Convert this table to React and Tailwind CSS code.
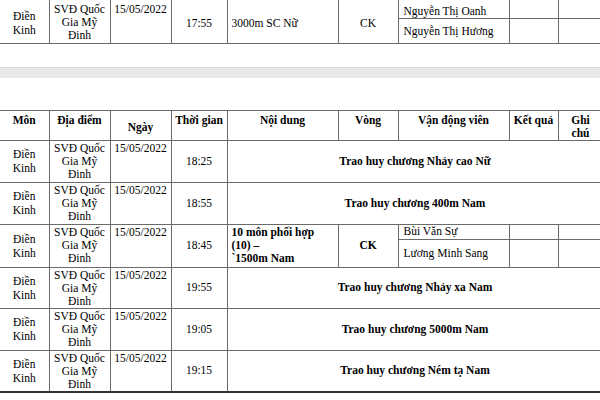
const cols = [49, 61, 61, 56, 111, 60, 111, 49, 45];

const td = 'border border-[#6b6b6b] p-0 px-[2px] text-center';

const Cols = () => (
  <colgroup>
    {cols.map((w, i) => (
      <col key={i} style={{ width: w }} />
    ))}
  </colgroup>
);

const Venue = () => (
  <>
    SVĐ Quốc
    <br />
    Gia Mỹ
    <br />
    Đinh
  </>
);

const Sport = () => (
  <span className="block leading-[14px]">
    Điền
    <br />
    Kinh
  </span>
);

const MedalRow = ({ time, text, h, last }) => {
  const b = last ? 'border-b-2 border-b-[#333]' : '';
  return (
    <tr className={h}>
      <td className={`${td} border-l-0 align-middle ${b}`}>
        <Sport />
      </td>
      <td className={`${td} align-top pt-[1px] ${b}`}>
        <Venue />
      </td>
      <td className={`${td} align-top pt-[1px] ${b}`}>15/05/2022</td>
      <td className={`${td} align-middle ${b}`}>{time}</td>
      <td colSpan={5} className={`${td} align-middle font-bold ${b}`}>
        {text}
      </td>
    </tr>
  );
};

const App = () => {
  return (
    <div className="w-[600px] h-[400px] overflow-hidden bg-white text-black font-['Liberation_Serif',serif] text-[11.5px] leading-[13px]">
      <table className="table-fixed border-collapse w-[603px]">
        <Cols />
        <tbody>
          <tr className="h-[18px]">
            <td rowSpan={2} className={`${td} border-l-0 border-t-0 align-middle pt-[4px]`}>
              <Sport />
            </td>
            <td rowSpan={2} className={`${td} border-t-0 align-top pt-[3px]`}>
              <Venue />
            </td>
            <td rowSpan={2} className={`${td} border-t-0 align-top pt-[3px]`}>
              15/05/2022
            </td>
            <td rowSpan={2} className={`${td} border-t-0 align-middle pt-[4px]`}>
              17:55
            </td>
            <td rowSpan={2} className={`${td} border-t-0 align-middle pt-[4px] text-left pl-[4px]`}>
              3000m SC Nữ
            </td>
            <td rowSpan={2} className={`${td} border-t-0 align-middle pt-[4px]`}>
              CK
            </td>
            <td className={`${td} border-t-0 text-left pl-[5px] align-bottom`}>Nguyễn Thị Oanh</td>
            <td className={`${td} border-t-0`}></td>
            <td className={`${td} border-t-0`}></td>
          </tr>
          <tr className="h-[25px]">
            <td className={`${td} text-left pl-[5px] align-middle pt-[2px]`}>Nguyễn Thị Hương</td>
            <td className={td}></td>
            <td className={td}></td>
          </tr>
        </tbody>
      </table>

      <div className="h-[23px]" />
      <div className="h-[11px] bg-[#e9e9e9] border-t border-[#d6d6d6]" />
      <div className="h-[32px]" />

      <table className="table-fixed border-collapse w-[603px]">
        <Cols />
        <tbody>
          <tr className="h-[28px] font-bold">
            <td className={`${td} border-l-0 align-top pt-[3px]`}>Môn</td>
            <td className={`${td} align-top pt-[3px]`}>Địa điểm</td>
            <td className={`${td} align-top pt-[10px]`}>Ngày</td>
            <td className={`${td} align-top pt-[3px]`}>Thời gian</td>
            <td className={`${td} align-top pt-[3px]`}>Nội dung</td>
            <td className={`${td} align-top pt-[3px]`}>Vòng</td>
            <td className={`${td} align-top pt-[3px]`}>Vận động viên</td>
            <td className={`${td} align-top pt-[3px]`}>Kết quả</td>
            <td className={`${td} align-top pt-[3px]`}>
              Ghi
              <br />
              chú
            </td>
          </tr>
          <MedalRow time="18:25" text="Trao huy chương Nhảy cao Nữ" h="h-[42px]" />
          <MedalRow time="18:55" text="Trao huy chương 400m Nam" h="h-[42px]" />
          <tr className="h-[15px]">
            <td rowSpan={2} className={`${td} border-l-0 align-middle`}>
              <Sport />
            </td>
            <td rowSpan={2} className={`${td} align-top pt-[1px]`}>
              <Venue />
            </td>
            <td rowSpan={2} className={`${td} align-top pt-[1px]`}>
              15/05/2022
            </td>
            <td rowSpan={2} className={`${td} align-middle`}>
              18:45
            </td>
            <td rowSpan={2} className={`${td} align-top pt-[1px] text-left pl-[4px] font-bold`}>
              10 môn phối hợp
              <br />
              (10) –
              <br />
              `1500m Nam
            </td>
            <td rowSpan={2} className={`${td} align-middle font-bold`}>
              CK
            </td>
            <td className={`${td} text-left pl-[5px] align-middle`}>Bùi Văn Sự</td>
            <td className={td}></td>
            <td className={td}></td>
          </tr>
          <tr className="h-[28px]">
            <td className={`${td} text-left pl-[5px] align-middle`}>Lương Minh Sang</td>
            <td className={td}></td>
            <td className={td}></td>
          </tr>
          <MedalRow time="19:55" text="Trao huy chương Nhảy xa Nam" h="h-[41px]" />
          <MedalRow time="19:05" text="Trao huy chương 5000m Nam" h="h-[42px]" />
          <MedalRow time="19:15" text="Trao huy chương Ném tạ Nam" h="h-[41px]" last />
        </tbody>
      </table>
    </div>
  );
};

export default App;
